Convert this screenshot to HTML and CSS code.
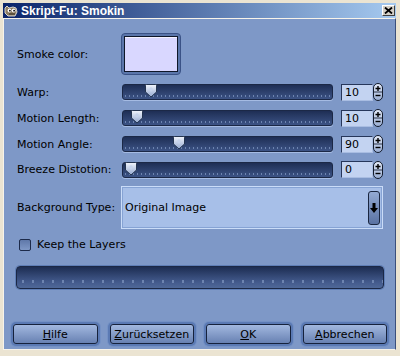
FILE: index.html
```html
<!DOCTYPE html>
<html lang="de">
<head>
  <meta charset="UTF-8">
  <title>Skript-Fu: Smokin</title>
  <link rel="stylesheet" href="styles.css">
</head>
<body>

  <div class="window">
    <!-- Titelleiste -->
    <div class="titlebar">
      <svg class="wilber" width="14" height="12" viewBox="0 0 14 12">
        <path d="M1 3 L3 1 L5 3 L9 2 L12 3 L13 7 L11 11 L4 11 L1 8 Z" fill="#8c7c62" stroke="#e8e4da" stroke-width="0.9"/>
        <circle cx="5.5" cy="5.5" r="1.9" fill="#fff"/>
        <circle cx="9.7" cy="5.5" r="1.9" fill="#fff"/>
        <circle cx="5.9" cy="5.7" r="0.9" fill="#000"/>
        <circle cx="10.1" cy="5.7" r="0.9" fill="#000"/>
        <path d="M5 9 L11 9" stroke="#2c261c" stroke-width="1"/>
      </svg>
      <span class="title">Skript-Fu: Smokin</span>
      <div class="close">
        <svg width="9" height="7" viewBox="0 0 9 7">
          <path d="M1 0.5 L8 6.5 M8 0.5 L1 6.5" stroke="#000" stroke-width="1.8"/>
        </svg>
      </div>
    </div>

    <div class="client">
      <div class="form">
        <span class="label">Smoke color:</span>
        <div class="colorbtn"><div class="swatch"></div></div>

        <span class="label">Warp:</span>
        <div class="scale">
          <div class="trough"><svg class="thumb" style="left:22px" width="12" height="14" viewBox="0 0 12 14"><use href="#thumb"/></svg></div>
          <div class="entry">10</div>
          <div class="spin"><svg width="8" height="16" viewBox="0 0 8 16"><use href="#pm"/></svg></div>
        </div>

        <span class="label">Motion Length:</span>
        <div class="scale">
          <div class="trough"><svg class="thumb" style="left:8px" width="12" height="14" viewBox="0 0 12 14"><use href="#thumb"/></svg></div>
          <div class="entry">10</div>
          <div class="spin"><svg width="8" height="16" viewBox="0 0 8 16"><use href="#pm"/></svg></div>
        </div>

        <span class="label">Motion Angle:</span>
        <div class="scale">
          <div class="trough"><svg class="thumb" style="left:50px" width="12" height="14" viewBox="0 0 12 14"><use href="#thumb"/></svg></div>
          <div class="entry">90</div>
          <div class="spin"><svg width="8" height="16" viewBox="0 0 8 16"><use href="#pm"/></svg></div>
        </div>

        <span class="label">Breeze Distotion:</span>
        <div class="scale">
          <div class="trough"><svg class="thumb" style="left:2px" width="12" height="14" viewBox="0 0 12 14"><use href="#thumb"/></svg></div>
          <div class="entry">0</div>
          <div class="spin"><svg width="8" height="16" viewBox="0 0 8 16"><use href="#pm"/></svg></div>
        </div>

        <span class="label">Background Type:</span>
        <div class="combo">
          <span class="combo-text">Original Image</span>
          <div class="combo-btn">
            <svg width="10" height="12" viewBox="0 0 10 12">
              <path d="M3.5 1 H6.5 V6 H9 L5 11 L1 6 H3.5 Z" fill="#000"/>
            </svg>
          </div>
        </div>
      </div>

      <div class="check">
        <span class="box"></span>
        <span>Keep the Layers</span>
      </div>

      <div class="progress"></div>

      <div class="buttons">
        <div class="btn"><u>H</u>ilfe</div>
        <div class="btn"><u>Z</u>urücksetzen</div>
        <div class="btn"><u>O</u>K</div>
        <div class="btn"><u>A</u>bbrechen</div>
      </div>
    </div>
  </div>

  <!-- gemeinsame Formen -->
  <svg width="0" height="0" class="defs">
    <defs>
      <linearGradient id="tg" x1="0" y1="0" x2="0" y2="1">
        <stop offset="0" stop-color="#f2f5fc"/>
        <stop offset="1" stop-color="#93a8d0"/>
      </linearGradient>
      <g id="thumb">
        <path d="M1.5 0.5 H10.5 Q11.5 0.5 11.5 1.5 V8 L6 13 L0.5 8 V1.5 Q0.5 0.5 1.5 0.5 Z" fill="url(#tg)" stroke="#24344f" stroke-width="1"/>
        <path d="M4 5 L6 3 L8 5 L6 8 Z" fill="#c6d3ec"/>
      </g>
      <g id="pm">
        <path d="M4 2 V7 M1.5 4.5 H6.5" stroke="#000" stroke-width="1.4"/>
        <path d="M0 8 H8" stroke="#2a3448" stroke-width="1"/>
        <path d="M1.5 11.5 H6.5" stroke="#000" stroke-width="1.4"/>
      </g>
    </defs>
  </svg>

</body>
</html>
```

FILE: styles.css
```css
* { box-sizing: border-box; }

body {
  margin: 0;
  font-family: "DejaVu Sans", sans-serif;
  font-size: 11px;
  color: #000;
  background: #ebe4d2;
}

.defs { position: absolute; }

.window {
  width: 400px;
  height: 356px;
  background: #ebe4d2;
  padding: 3px 4px 6px 3px;
  display: flex;
  flex-direction: column;
}

/* Titelleiste */
.titlebar {
  height: 15px;
  flex: none;
  display: flex;
  align-items: center;
  gap: 3px;
  padding-left: 1px;
  background: linear-gradient(to right, #0a246a, #a6caf0);
  color: #fff;
  font: bold 12px "Liberation Sans", sans-serif;
}
.title { flex: 1; }
.close {
  width: 13px;
  height: 11px;
  margin-right: 1px;
  background: #d4d0c8;
  border: 1px solid;
  border-color: #fff #404040 #404040 #fff;
  display: flex;
  align-items: center;
  justify-content: center;
}

.client {
  flex: 1;
  background: #7e98c7;
  border-top: 1px solid #f7f3ea;
  border-left: 1px solid #f7f3ea;
  border-right: 1px solid #3b4f7c;
  border-bottom: 1px solid #f7f3ea;
  padding: 14px 12px 0 13px;
  display: flex;
  flex-direction: column;
}

.form {
  display: grid;
  grid-template-columns: 104px 262px;
  grid-template-rows: 42px 18px 18px 18px 17px 43px;
  row-gap: 8px;
  align-items: center;
}

/* Farbknopf */
.colorbtn {
  width: 60px;
  height: 42px;
  padding: 2px;
  border: 1px solid #3a5286;
  border-radius: 4px;
  background: #5b76ab;
}
.swatch {
  height: 100%;
  border: 1px solid #0f1729;
  background: #d9d7ff;
  box-shadow: inset 0 1px 0 #f4f2ff;
}

/* Schieberegler */
.scale {
  display: flex;
  align-items: center;
}
.trough {
  position: relative;
  width: 211px;
  height: 16px;
  margin-left: 1px;
  border: 1px solid #1b2846;
  border-radius: 3px;
  background:
    repeating-linear-gradient(to right, transparent 0 2px, #6d84b0 2px 3px, transparent 3px 4px) left 0 bottom 2px / 100% 2px no-repeat,
    linear-gradient(#1e2e54, #3c5385);
  box-shadow: 0 1px 0 #a5bbe3;
}
.thumb {
  position: absolute;
  top: -1px;
}
.entry {
  width: 32px;
  height: 17px;
  margin-left: 8px;
  padding-left: 3px;
  line-height: 15px;
  background: #c3d3f1;
  border: 1px solid;
  border-color: #26365a #a9bde2 #a9bde2 #26365a;
}
.spin {
  width: 10px;
  height: 18px;
  border: 1px solid #141c2c;
  border-radius: 5px;
  background: linear-gradient(#e3eaf8, #9aaed3);
  display: flex;
  align-items: center;
  justify-content: center;
}

/* Auswahlliste */
.combo {
  height: 43px;
  display: flex;
  align-items: center;
  padding: 0 2px 0 3px;
  border: 1px solid #cadcf8;
  background: #a7bfe8;
  box-shadow: inset 0 0 0 1px #86a3d4;
}
.combo-text { flex: 1; }
.combo-btn {
  width: 12px;
  height: 34px;
  border: 1px solid #1a2640;
  border-radius: 3px;
  background: linear-gradient(#93aad3, #5a72a2);
  display: flex;
  align-items: center;
  justify-content: center;
}

/* Checkbox */
.check {
  display: flex;
  align-items: center;
  gap: 6px;
  height: 13px;
  margin-top: 9px;
  padding-left: 2px;
}
.box {
  width: 12px;
  height: 12px;
  border: 1px solid #1c2a4a;
  border-radius: 2px;
  background: linear-gradient(#5f78a9, #7f98c6);
}

/* Fortschrittsbalken */
.progress {
  width: 368px;
  height: 23px;
  margin: 15px 0 0 -1px;
  border: 1px solid #1b2846;
  border-radius: 4px;
  background:
    repeating-linear-gradient(to right, transparent 0 5px, #6d84b0 5px 7px, transparent 7px 10px) left 0 bottom 5px / 100% 3px no-repeat,
    linear-gradient(#1d2d52, #42598b 70%, #4f6898);
  box-shadow: 0 0 0 1px #5f7eb6;
}

/* Knöpfe */
.buttons {
  display: grid;
  grid-template-columns: repeat(4, 1fr);
  gap: 12px;
  width: 374px;
  margin: 35px 0 0 -4px;
}
.btn {
  height: 20px;
  border: 1px solid #16223c;
  border-radius: 3px;
  background: linear-gradient(#a2b8df, #6881b2);
  box-shadow: 0 0 0 2px #5b7ab4, 0 0 0 3px #7491c5;
  display: flex;
  align-items: center;
  justify-content: center;
}
.btn u { text-underline-offset: 1px; }
```
